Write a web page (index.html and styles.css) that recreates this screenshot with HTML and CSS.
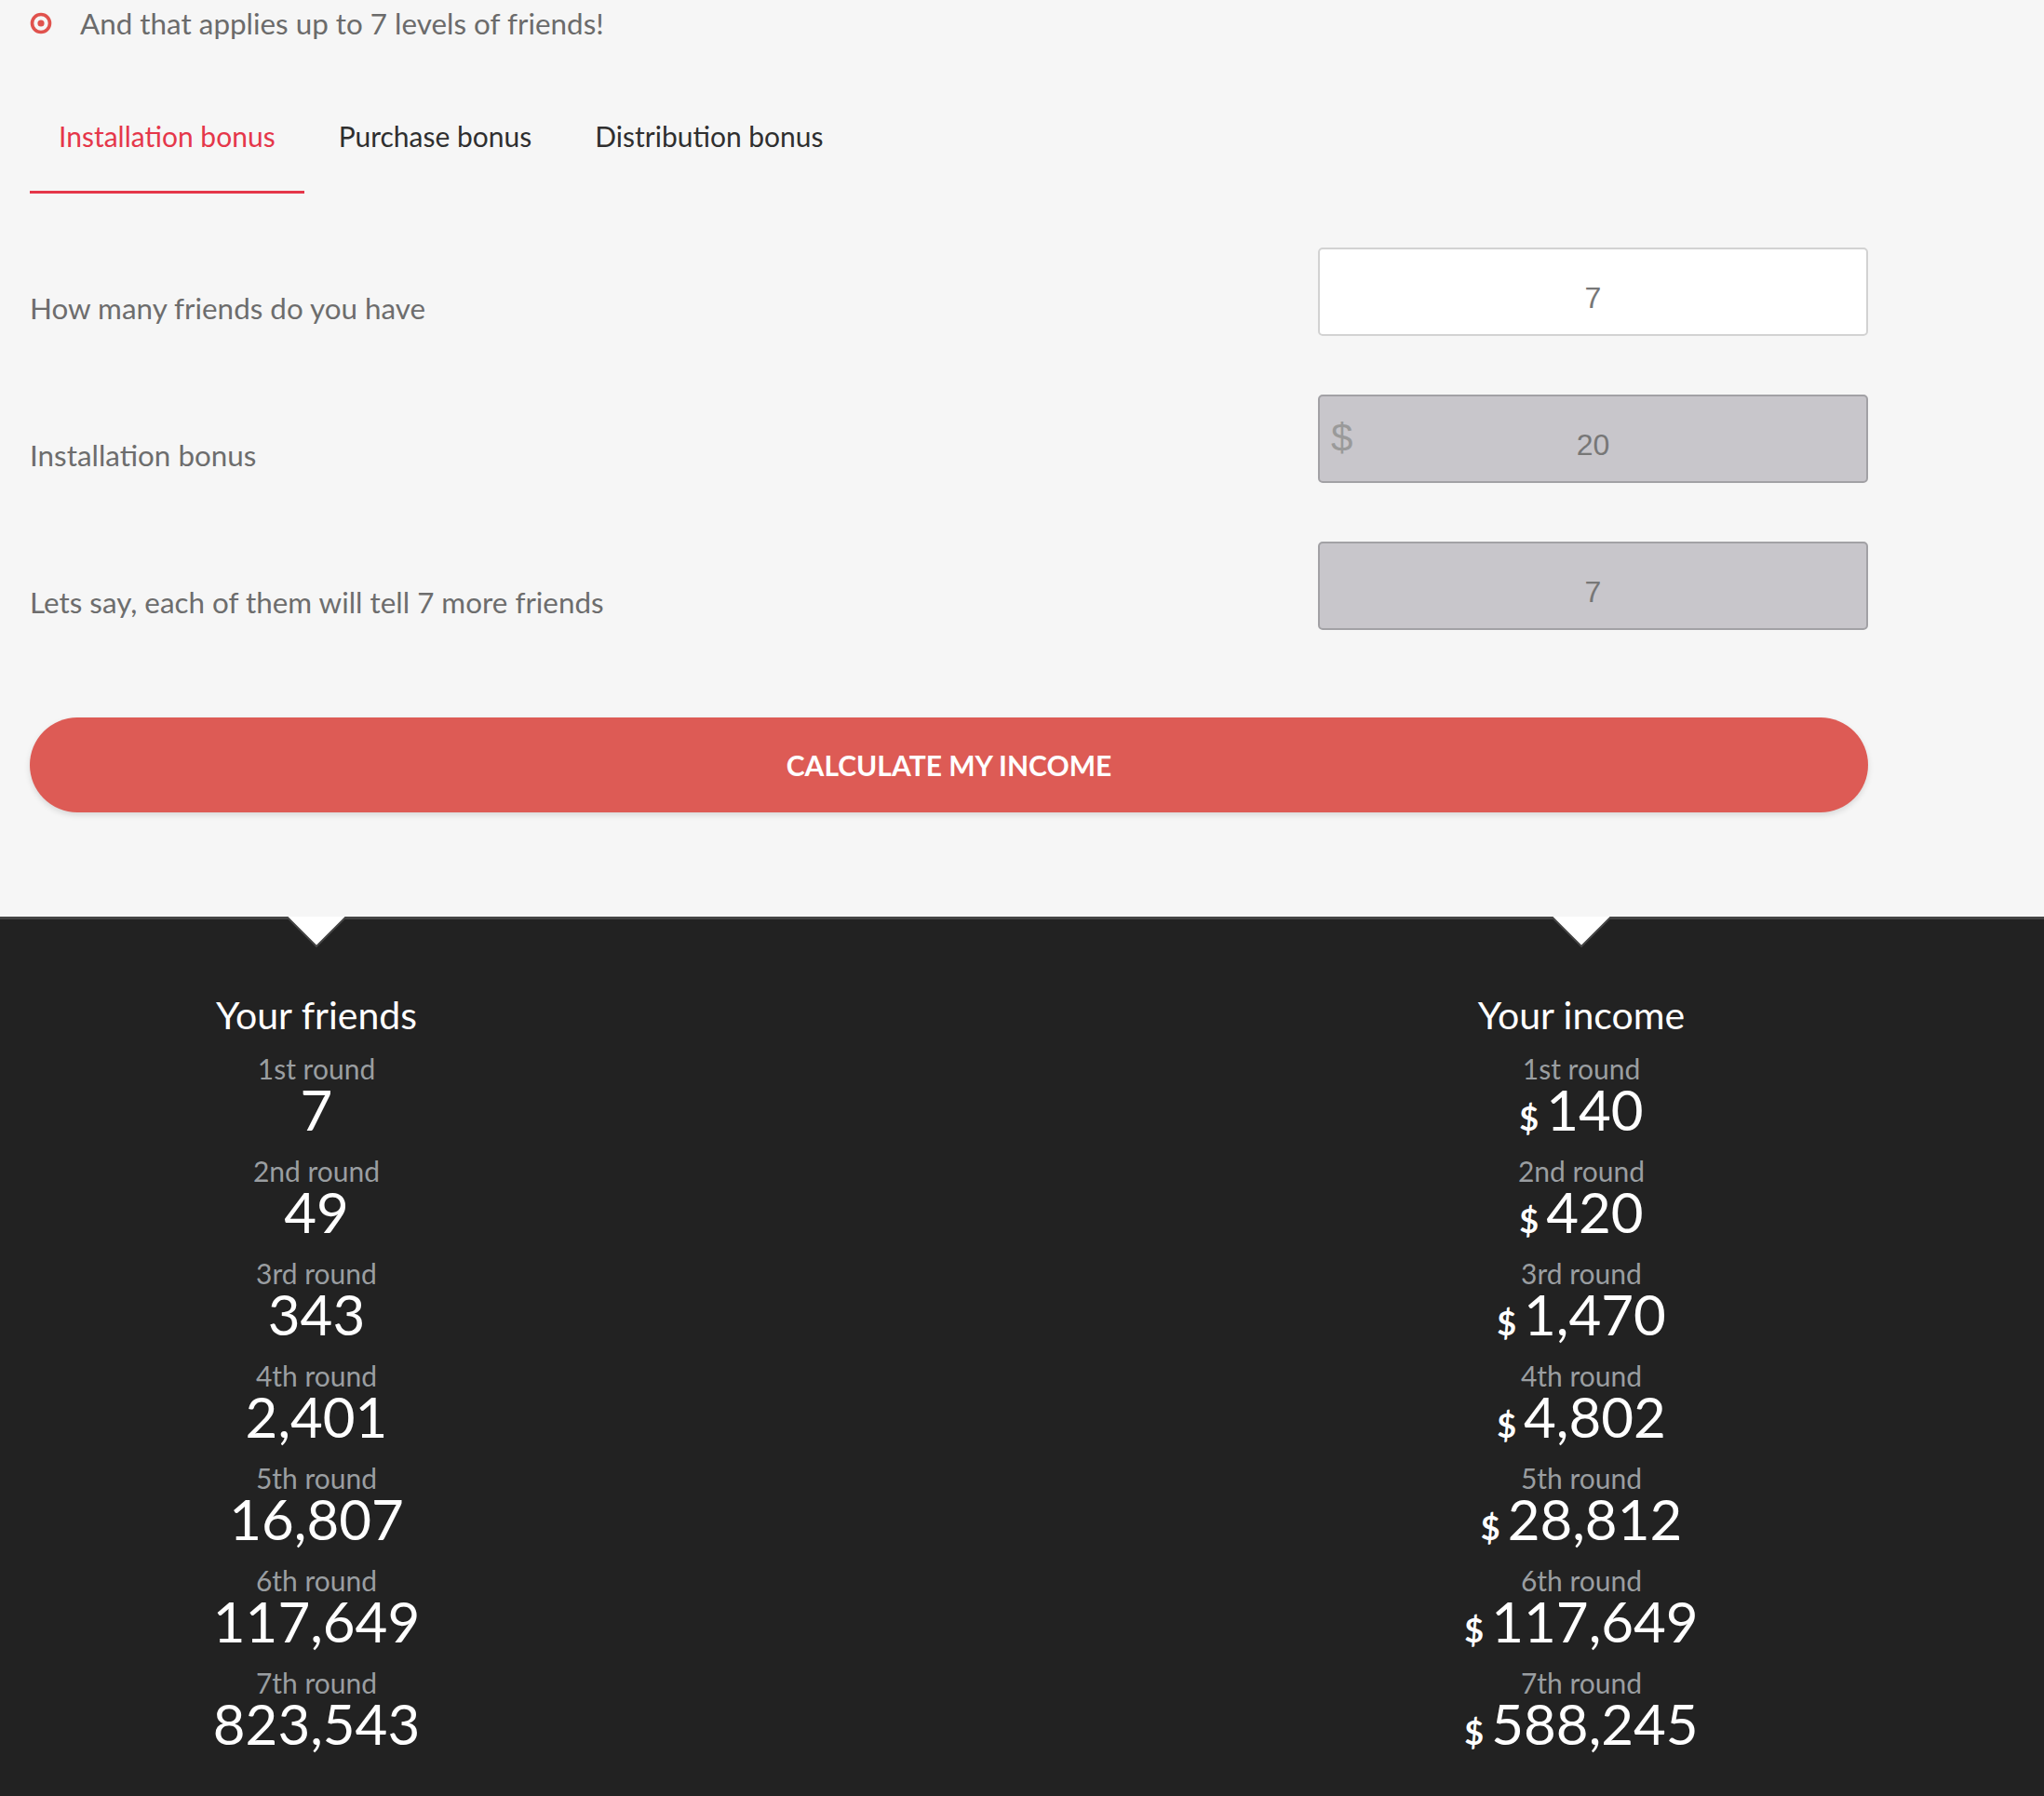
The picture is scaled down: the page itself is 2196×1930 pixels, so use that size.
FILE: index.html
```html
<!DOCTYPE html>
<html lang="en">
<head>
    <meta charset="UTF-8">
    <meta name="viewport" content="width=device-width, initial-scale=1.0">
    <title>Income calculator</title>
    <link rel="stylesheet" href="styles.css">
</head>
<body>
    <div class="wrap">
        <p class="note">
            <svg class="note-icon" viewBox="0 0 24 24"><circle cx="12" cy="12" r="9.5" fill="none" stroke="#e0524d" stroke-width="3.6"/><circle cx="12" cy="12" r="3.6" fill="#e0524d"/></svg>
            And that applies up to 7 levels of friends!
        </p>

        <ul class="tabs">
            <li class="tab active">Installation bonus</li>
            <li class="tab">Purchase bonus</li>
            <li class="tab">Distribution bonus</li>
        </ul>

        <form class="calc">
            <div class="row">
                <label class="row-label">How many friends do you have</label>
                <div class="field">
                    <input type="text" value="7">
                </div>
            </div>
            <div class="row">
                <label class="row-label">Installation bonus</label>
                <div class="field locked">
                    <span class="currency">$</span>
                    <input type="text" value="20" readonly>
                </div>
            </div>
            <div class="row">
                <label class="row-label">Lets say, each of them will tell 7 more friends</label>
                <div class="field locked">
                    <input type="text" value="7" readonly>
                </div>
            </div>
            <button type="button" class="calc-btn">Calculate my income</button>
        </form>
    </div>

    <section class="results">
        <div class="wrap results-cols">
            <div class="col">
                <svg class="pointer" viewBox="0 0 64 33"><polygon points="0,0 64,0 32,32" fill="#fff"/><polyline points="0,0 32,32 64,0" fill="none" stroke="#444" stroke-width="2"/></svg>
                <h2>Your friends</h2>
                <div class="round"><div class="round-label">1st round</div><div class="round-value">7</div></div>
                <div class="round"><div class="round-label">2nd round</div><div class="round-value">49</div></div>
                <div class="round"><div class="round-label">3rd round</div><div class="round-value">343</div></div>
                <div class="round"><div class="round-label">4th round</div><div class="round-value">2,401</div></div>
                <div class="round"><div class="round-label">5th round</div><div class="round-value">16,807</div></div>
                <div class="round"><div class="round-label">6th round</div><div class="round-value">117,649</div></div>
                <div class="round"><div class="round-label">7th round</div><div class="round-value">823,543</div></div>
            </div>
            <div class="col">
                <svg class="pointer" viewBox="0 0 64 33"><polygon points="0,0 64,0 32,32" fill="#fff"/><polyline points="0,0 32,32 64,0" fill="none" stroke="#444" stroke-width="2"/></svg>
                <h2>Your income</h2>
                <div class="round"><div class="round-label">1st round</div><div class="round-value"><span class="cur">$</span>140</div></div>
                <div class="round"><div class="round-label">2nd round</div><div class="round-value"><span class="cur">$</span>420</div></div>
                <div class="round"><div class="round-label">3rd round</div><div class="round-value"><span class="cur">$</span>1,470</div></div>
                <div class="round"><div class="round-label">4th round</div><div class="round-value"><span class="cur">$</span>4,802</div></div>
                <div class="round"><div class="round-label">5th round</div><div class="round-value"><span class="cur">$</span>28,812</div></div>
                <div class="round"><div class="round-label">6th round</div><div class="round-value"><span class="cur">$</span>117,649</div></div>
                <div class="round"><div class="round-label">7th round</div><div class="round-value"><span class="cur">$</span>588,245</div></div>
            </div>
        </div>
    </section>
</body>
</html>
```

FILE: styles.css
```css
body {
    margin: 0;
    background: #f6f6f6;
    font-family: Lato, "Open Sans", sans-serif;
}
.wrap {
    width: 1975px;
    margin-left: 32px;
}
.note {
    display: flex;
    align-items: center;
    margin: 0;
    padding-top: 7px;
    font-size: 31.4px;
    line-height: 36px;
    color: #6b6b6b;
}
.note-icon {
    width: 24px;
    height: 24px;
    margin-right: 30px;
}
.tabs {
    display: flex;
    list-style: none;
    margin: 44px 0 0;
    padding: 0;
}
.tab {
    padding: 42px 31px;
    margin-right: 6px;
    font-size: 30px;
    line-height: 34px;
    color: #2f2f2f;
    border-bottom: 3px solid transparent;
    cursor: pointer;
}
.tab.active {
    color: #e5374a;
    border-bottom-color: #e5374a;
}
.calc {
    display: flex;
    flex-direction: column;
    gap: 63px;
    margin-top: 58px;
}
.row {
    display: flex;
    justify-content: space-between;
    align-items: center;
}
.row-label {
    margin-top: 36px;
    font-size: 31.4px;
    line-height: 37px;
    color: #6d6d6d;
}
.field {
    position: relative;
    width: 591px;
}
.field input {
    display: block;
    width: 100%;
    height: 95px;
    box-sizing: border-box;
    padding: 14px 10px 0;
    border: 2px solid #d2d2d2;
    border-radius: 5px;
    background: #fff;
    text-align: center;
    font-family: "Liberation Sans", Arial, sans-serif;
    font-size: 32px;
    color: #777;
    outline: none;
}
.field.locked input {
    background: #c8c6cb;
    border-color: #a2a1a5;
}
.currency {
    position: absolute;
    left: 14px;
    top: 26px;
    font-family: "Liberation Sans", Arial, sans-serif;
    font-size: 42px;
    line-height: 42px;
    color: #9a9a9a;
}
.calc-btn {
    display: block;
    width: 100%;
    height: 102px;
    margin-top: 31px;
    border: none;
    border-radius: 51px;
    background: #dd5b55;
    box-shadow: 0 3px 6px rgba(0, 0, 0, 0.12);
    color: #fff;
    font-family: Lato, sans-serif;
    font-weight: 700;
    font-size: 30px;
    text-transform: uppercase;
    cursor: pointer;
}
.results {
    margin-top: 112px;
    padding-bottom: 52px;
    background: #222;
    border-top: 3px solid #444;
}
.results-cols {
    display: flex;
    justify-content: space-between;
}
.col {
    width: 616px;
    text-align: center;
    color: #fff;
}
.pointer {
    display: block;
    width: 64px;
    height: 33px;
    margin: -3px auto 0;
}
.col h2 {
    margin: 48px 0 16px;
    font-size: 41px;
    line-height: 49px;
    font-weight: 400;
}
.round {
    margin-bottom: 22px;
}
.round:last-child {
    margin-bottom: 0;
}
.round-label {
    font-size: 30px;
    line-height: 34px;
    color: #9a9ea1;
}
.round-value {
    font-size: 60px;
    line-height: 54px;
}
.cur {
    margin-right: 8px;
    font-size: 36px;
    line-height: 1;
    font-weight: 700;
}
```
